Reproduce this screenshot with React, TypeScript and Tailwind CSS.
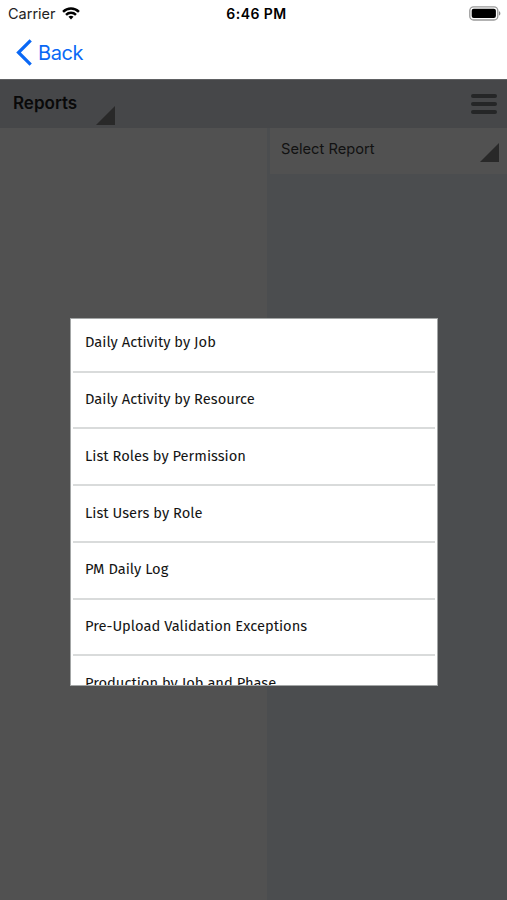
type ReportItem = {
    id: number;
    title: string;
};

const reports: ReportItem[] = [
    { id: 1, title: 'Daily Activity by Job' },
    { id: 2, title: 'Daily Activity by Resource' },
    { id: 3, title: 'List Roles by Permission' },
    { id: 4, title: 'List Users by Role' },
    { id: 5, title: 'PM Daily Log' },
    { id: 6, title: 'Pre-Upload Validation Exceptions' },
    { id: 7, title: 'Production by Job and Phase' },
];

const Corner = () => (
    <svg width="19" height="19" viewBox="0 0 19 19" className="fill-[#292929]">
        <path d="M19 0V19H0Z" />
    </svg>
);

const StatusBar = () => (
    <div className="grid h-[27px] grid-cols-3 items-center pl-2 pr-1.5 text-black">
        <div className="flex items-center gap-1.5">
            <span className="text-[14.5px] text-[#222]">Carrier</span>
            <svg width="18" height="13" viewBox="0 0 17 12" fill="none" stroke="black" strokeWidth="2.3">
                <path d="M1 4.4C5.2 .2 11.8 .2 16 4.4" />
                <path d="M3.8 7.2C6.4 4.6 10.6 4.6 13.2 7.2" />
                <path d="M6.1 9.1C7.5 7.8 9.5 7.8 10.9 9.1L8.5 11.7Z" fill="black" stroke="none" />
            </svg>
        </div>
        <span className="pl-1 text-center text-[14px] font-semibold tracking-[0.45px]">6:46 PM</span>
        <svg width="32" height="15" viewBox="0 0 32 15" className="justify-self-end">
            <rect x=".8" y=".8" width="28" height="13.2" rx="3.8" fill="white" stroke="#999" strokeWidth="1.3" />
            <rect x="2.7" y="2.7" width="24.2" height="9.4" rx="2" fill="black" />
            <path d="M30 5.2C31.8 5.8 31.8 9 30 9.6Z" fill="#888" />
        </svg>
    </div>
);

const ReportPicker = () => (
    <div className="absolute left-[70px] top-[318px] h-[368px] w-[368px] overflow-hidden border border-[#a3a6a6] bg-white px-0.5 font-['Fira_Sans','Noto_Sans',sans-serif]">
        <ul className="-mt-[3.3px]">
            {reports.map((item) => (
                <li key={item.id} className="flex h-[56.8px] items-center border-b-2 border-[#d9dbdb] px-3 pb-[1.6px] text-[14.7px] text-[#141414]">
                    {item.title}
                </li>
            ))}
        </ul>
    </div>
);

export default function App() {
    return (
        <div className="relative flex h-[900px] w-[507px] flex-col overflow-hidden bg-white font-['Inter',sans-serif]">
            <StatusBar />
            <nav className="flex h-[52px] items-center gap-1.5 pb-0.5 pl-4 text-[#0a68f5]">
                <svg width="16" height="27" viewBox="0 0 16 27" fill="none" stroke="currentColor" strokeWidth="3.2">
                    <path d="M14.7 1.3L2.5 13.5L14.7 25.7" />
                </svg>
                <span className="pt-0.5 text-[20px] tracking-[-0.4px]">Back</span>
            </nav>
            <header className="flex h-[49px] justify-between border-t border-[#606163] bg-[#464749] pl-[13px] pr-2.5">
                <div className="flex">
                    <h1 className="w-[83px] pt-[11px] text-[17px] font-semibold leading-6 text-[#090909]">Reports</h1>
                    <div className="pt-[25.5px]">
                        <Corner />
                    </div>
                </div>
                <div className="flex flex-col gap-1 pt-[13.5px]">
                    <span className="h-1 w-[26px] rounded-xs bg-[#252627]" />
                    <span className="h-1 w-[26px] rounded-xs bg-[#252627]" />
                    <span className="h-1 w-[26px] rounded-xs bg-[#252627]" />
                </div>
            </header>
            <main className="flex flex-1">
                <section className="w-[267px] bg-[#515151]" />
                <section className="flex-1 bg-[#4b4d4f]">
                    <div className="ml-[3px] flex h-[46px] justify-between bg-[#515151] pl-[11px] pr-2">
                        <span className="pt-[11px] text-[14.7px] leading-5 text-[#121212]">Select Report</span>
                        <div className="pt-[14.5px]">
                            <Corner />
                        </div>
                    </div>
                </section>
            </main>
            <ReportPicker />
        </div>
    );
}
